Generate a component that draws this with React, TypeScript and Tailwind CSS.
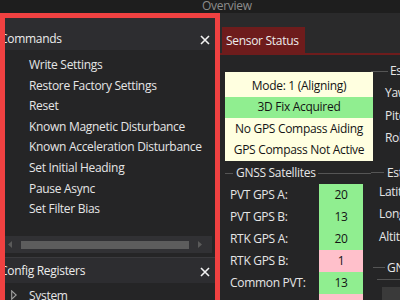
const commands = [
  "Write Settings",
  "Restore Factory Settings",
  "Reset",
  "Known Magnetic Disturbance",
  "Known Acceleration Disturbance",
  "Set Initial Heading",
  "Pause Async",
  "Set Filter Bias",
];

const satellites = [
  { label: "PVT GPS A:", value: 20, ok: true },
  { label: "PVT GPS B:", value: 13, ok: true },
  { label: "RTK GPS A:", value: 20, ok: true },
  { label: "RTK GPS B:", value: 1, ok: false },
  { label: "Common PVT:", value: 13, ok: true },
  { label: "Common RTK:", value: 1, ok: false },
];

const status = [
  { text: "Mode: 1 (Aligning)", bg: "bg-[#ffffe0]" },
  { text: "3D Fix Acquired", bg: "bg-[#90ee90]" },
  { text: "No GPS Compass Aiding", bg: "bg-[#ffffe0]" },
  { text: "GPS Compass Not Active", bg: "bg-[#ffffe0]" },
];

function CloseIcon() {
  return (
    <svg width="10" height="10" viewBox="0 0 10 10" className="shrink-0 mt-[4px]">
      <path d="M1 1L9 9M9 1L1 9" stroke="#f2f2f2" strokeWidth="1.6" />
    </svg>
  );
}

function Arrow({ dir }: { dir: "left" | "right" }) {
  return (
    <svg width="4" height="7" viewBox="0 0 4 7" className="shrink-0">
      <path d={dir === "left" ? "M4 0L0 3.5L4 7Z" : "M0 0L4 3.5L0 7Z"} fill="#5a5a5a" />
    </svg>
  );
}

export default function App() {
  return (
    <div className="relative w-[400px] h-[300px] overflow-hidden bg-[#252526] text-[12px] tracking-[-0.3px] text-[#e6e6e6] font-['Open_Sans',sans-serif]">
      <div className="h-[13px] bg-[#1e1e1e] pl-[202px] leading-[12px] text-[#8c8c8c]">Overview</div>

      <div className="flex h-[287px]">
        {/* docked tool panels */}
        <div className="w-[220px] shrink-0 flex flex-col bg-[#252526]">
          <div className="h-[37px] shrink-0 bg-[#2d2d30] flex items-start justify-between pt-[18px] pr-[10px] leading-[16px] text-[#ececec]">
            <span>Commands</span>
            <CloseIcon />
          </div>
          <div className="h-[186px] shrink-0 pt-[5px] pl-[29px] leading-[20.6px] whitespace-nowrap">
            {commands.map((c) => (
              <div key={c}>{c}</div>
            ))}
          </div>
          <div className="h-[17px] shrink-0 w-[212px] bg-[#313134] flex items-center pl-[8px]">
            <Arrow dir="left" />
            <div className="ml-[9px] w-[168px] h-[8px] bg-[#5d5d5d]" />
            <div className="ml-[9px]">
              <Arrow dir="right" />
            </div>
          </div>
          <div className="h-[4px] shrink-0" />
          <div className="h-px shrink-0 bg-[#3a3a3d]" />
          <div className="h-[25px] shrink-0 bg-[#2d2d30] flex items-start justify-between pt-[5px] pr-[10px] leading-[16px] text-[#ececec]">
            <span>Config Registers</span>
            <CloseIcon />
          </div>
          <div className="flex items-start pt-[5px] leading-[16px]">
            <svg width="6" height="10" viewBox="0 0 6 10" className="ml-[11px] mt-[2px]">
              <path d="M0.7 0.8L5.2 5L0.7 9.2Z" fill="none" stroke="#a0a0a0" strokeWidth="1.1" />
            </svg>
            <span className="ml-[12px]">System</span>
          </div>
        </div>

        {/* document area */}
        <div className="flex-1 min-w-0 flex flex-col">
          <div className="h-[42px] shrink-0 bg-[#2a2a2b] flex items-end border-b-2 border-[#6e1c1c]">
            <div className="ml-[2px] w-[83px] h-[26px] bg-[#6e1c1c] pl-[4px] pt-[6px] leading-[16px] text-[#ededed] whitespace-nowrap">
              Sensor Status
            </div>
          </div>

          <div className="flex flex-1 min-h-0">
            <div className="w-[151px] shrink-0 pl-[5px]">
              <div className="mt-[17px] w-[148px] bg-[#ffffe0] pt-[3px] text-[#141414]">
                {status.map((s) => (
                  <div key={s.text} className={`h-[21.5px] flex items-center justify-center ${s.bg}`}>
                    {s.text}
                  </div>
                ))}
              </div>

              <div className="mt-[4px] h-[16px] flex items-center leading-[16px]">
                <div className="w-[8px] h-px bg-[#555555]" />
                <span className="ml-[3px]">GNSS Satellites</span>
                <div className="flex-1 ml-[2px] h-px bg-[#555555]" />
              </div>

              <div className="mt-[3px]">
                {satellites.map((s) => (
                  <div key={s.label} className="h-[22px] flex items-center">
                    <span className="pl-[5px] w-[94px] whitespace-nowrap">{s.label}</span>
                    <div
                      className={`w-[44px] h-full flex items-center justify-center text-[#141414] ${
                        s.ok ? "bg-[#90ee90]" : "bg-[#ffc0cb]"
                      }`}
                    >
                      {s.value}
                    </div>
                  </div>
                ))}
              </div>
            </div>

            <div className="flex-1 min-w-0 overflow-hidden whitespace-nowrap">
              <div className="mt-[8px] h-[16px] flex items-center leading-[16px]">
                <div className="w-[17px] h-px shrink-0 bg-[#555555]" />
                <span className="ml-[2px]">Estimated Attitude</span>
              </div>
              <div className="mt-[3px] pl-[14px]">
                <div className="h-[22.5px] flex items-center">Yaw:</div>
                <div className="h-[22.5px] flex items-center">Pitch:</div>
                <div className="h-[22.5px] flex items-center">Roll:</div>
              </div>

              <div className="mt-[15px] h-[16px] flex items-center leading-[16px]">
                <div className="w-[13px] h-px shrink-0 bg-[#555555]" />
                <span className="ml-[3px]">Estimated Position</span>
              </div>
              <div className="pl-[8px]">
                <div className="h-[22.5px] flex items-center">Latitude:</div>
                <div className="h-[22.5px] flex items-center">Longitude:</div>
                <div className="h-[22.5px] flex items-center">Altitude:</div>
              </div>

              <div className="mt-[11.5px] h-[16px] flex items-center leading-[16px]">
                <div className="ml-[2px] w-[12px] h-px shrink-0 bg-[#555555]" />
                <span className="ml-[2px]">GNSS Position</span>
              </div>
              <div className="mt-[3px] ml-[6px] h-px bg-[#555555]" />
              <div className="mt-[7px] ml-[11px] h-[20px] bg-[#3a3a3a]" />
            </div>
          </div>
        </div>
      </div>

      {/* highlight box drawn over the docked panel */}
      <div className="absolute left-0 top-[13px] w-[220px] h-[300px] border-[5px] border-[#f04141] pointer-events-none" />
    </div>
  );
}
